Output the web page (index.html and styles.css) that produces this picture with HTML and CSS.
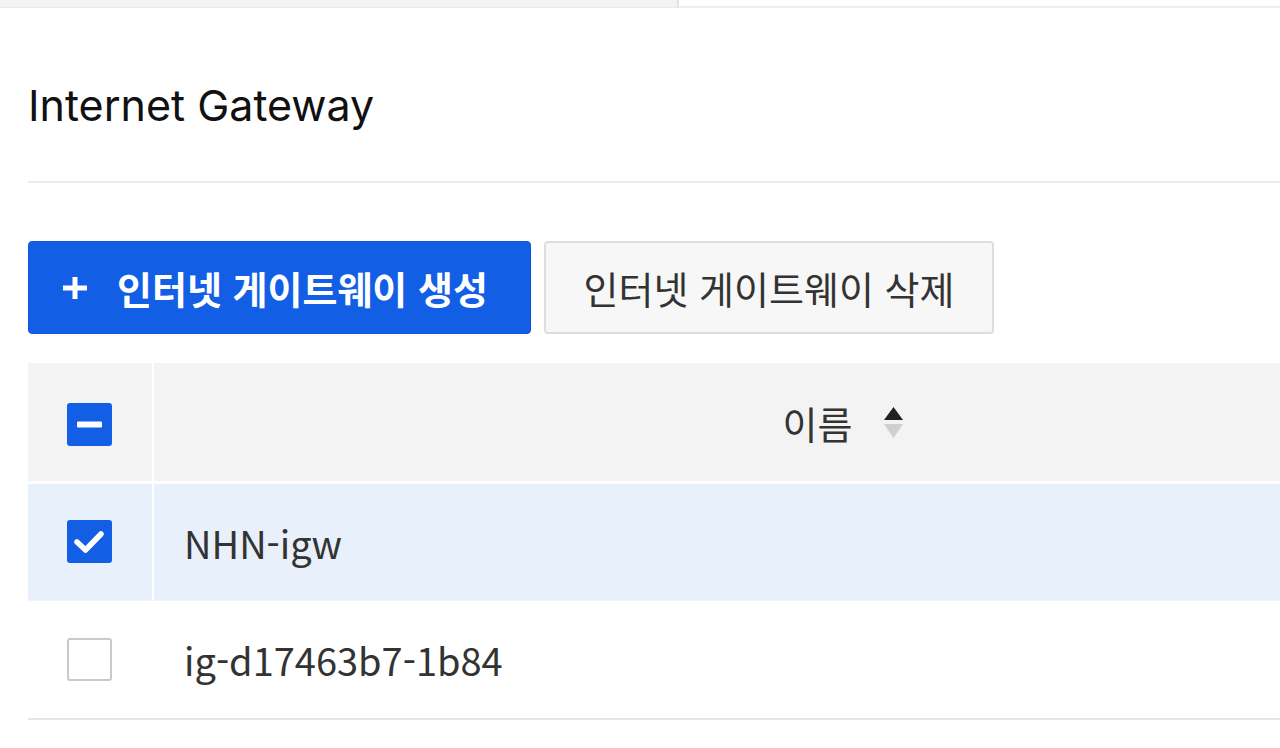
FILE: index.html
```html
<!DOCTYPE html>
<html lang="ko">
<head>
<meta charset="utf-8">
<link rel="stylesheet" href="styles.css">
</head>
<body>
<div class="topbar">
  <div class="topbar-left"></div>
  <div class="topbar-right"></div>
</div>
<main class="content">
  <h1 class="title">Internet Gateway</h1>
  <div class="toolbar">
    <button class="btn btn-primary"><svg class="plus" viewBox="0 0 24 22" width="24" height="22"><rect x="0" y="8.5" width="24" height="5" fill="#fff"/><rect x="9.5" y="0" width="5" height="22" fill="#fff"/></svg>인터넷 게이트웨이 생성</button>
    <button class="btn btn-default">인터넷 게이트웨이 삭제</button>
  </div>
  <div class="table">
    <div class="row head">
      <div class="cell check"><span class="cb cb-on"><svg viewBox="0 0 45 43" width="45" height="43"><rect x="10" y="18.5" width="25" height="6" rx="1" fill="#fff"/></svg></span></div>
      <div class="cell name head-name">이름<span class="sort"><svg viewBox="0 0 19 31" width="19" height="31"><path d="M9.5 0 L19 13 L0 13 Z" fill="#222"/><path d="M9.5 31 L19 17 L0 17 Z" fill="#cfcfcf"/></svg></span></div>
    </div>
    <div class="row selected">
      <div class="cell check"><span class="cb cb-on"><svg viewBox="0 0 45 43" width="45" height="43"><path d="M10 22 L18.5 30 L34 14" fill="none" stroke="#fff" stroke-width="5.5" stroke-linecap="round" stroke-linejoin="round"/></svg></span></div>
      <div class="cell name">NHN-igw</div>
    </div>
    <div class="row">
      <div class="cell check"><span class="cb cb-off"></span></div>
      <div class="cell name">ig-d17463b7-1b84</div>
    </div>
  </div>
</main>
</body>
</html>
```

FILE: styles.css
```css
* { box-sizing: border-box; }
html, body { margin: 0; padding: 0; background: #fff; }
body {
  width: 1280px;
  height: 748px;
  overflow: hidden;
  font-family: "Noto Sans CJK KR", "Noto Sans", sans-serif;
  color: #333;
}
.topbar { display: flex; height: 8px; }
.topbar-left {
  width: 679px;
  background: #f3f3f3;
  border-bottom: 1px solid #e9e9e9;
  border-right: 2px solid #e2e2e2;
}
.topbar-right {
  flex: 1;
  border-bottom: 2px solid #efefef;
}
.content { padding-left: 28px; }
.title {
  margin: 0;
  font-family: Inter, "Noto Sans", sans-serif;
  font-weight: 400;
  font-size: 43px;
  line-height: 52px;
  color: #111;
  padding-top: 71px;
  padding-bottom: 50px;
  border-bottom: 2px solid #ebebeb;
}
.toolbar {
  display: flex;
  gap: 13px;
  margin-top: 58px;
}
.btn {
  height: 93px;
  border-radius: 4px;
  font-family: "Noto Sans CJK KR", sans-serif;
  font-size: 38px;
  display: flex;
  align-items: center;
  padding: 0;
  cursor: pointer;
}
.btn-primary {
  width: 503px;
  background: #125fe6;
  border: 1px solid #0f58d8;
  color: #fff;
  font-weight: 700;
  padding-left: 34px;
}
.plus { margin-right: 30px; flex: none; }
.btn-default {
  width: 450px;
  justify-content: center;
  background: #f7f7f7;
  border: 2px solid #dedede;
  color: #333;
  font-weight: 400;
}
.table {
  margin-top: 29px;
  width: 1504px;
  border-bottom: 2px solid #e6e6e6;
}
.row { display: flex; height: 117px; }
.row.head { background: #f3f3f3; height: 121px; border-bottom: 3px solid #fff; }
.row.selected { background: #e8f0fc; height: 117px; border-bottom: 1px solid #f0f3f8; }
.cell { display: flex; align-items: center; }
.check {
  width: 126px;
  justify-content: center;
  border-right: 2px solid #fff;
  padding-right: 2px;
}
.row:last-child .check { border-right-color: transparent; }
.name {
  flex: 1;
  padding-left: 30px;
  font-size: 38px;
  color: #333;
}
.head-name { justify-content: center; padding-left: 0; color: #333; }
.sort { display: inline-flex; margin-left: 32px; }
.cb {
  width: 45px;
  height: 43px;
  border-radius: 3px;
  display: inline-flex;
}
.row.head .cb { margin-top: 4px; }
.row.selected .cb { margin-top: -2px; }
.cb-on { background: #125fe6; }
.cb-off { background: #fff; border: 2px solid #c9c9c9; }
```
